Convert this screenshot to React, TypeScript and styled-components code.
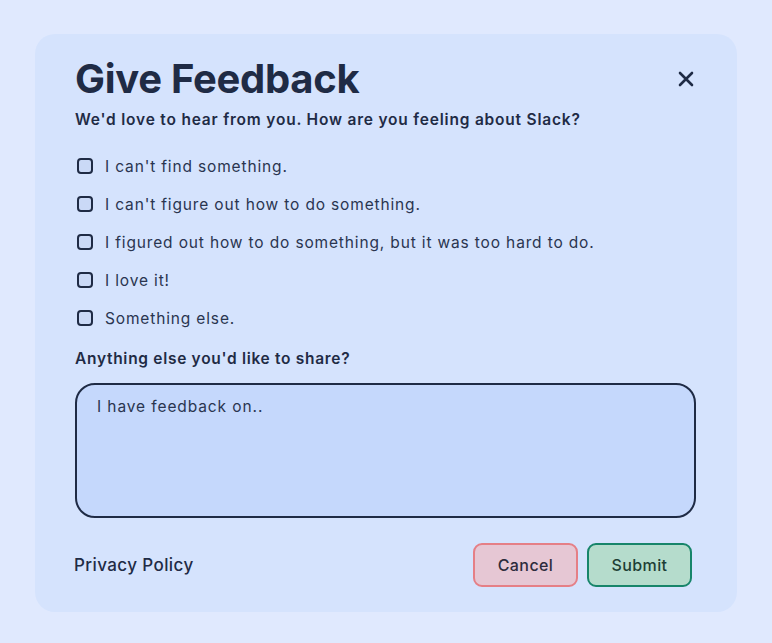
import React from "react";
import styled, { createGlobalStyle } from "styled-components";

const GlobalStyle = createGlobalStyle`
  html, body {
    margin: 0;
    padding: 0;
    background: #e0e9fe;
    font-family: Inter, "Open Sans", sans-serif;
    color: #1f2b45;
  }
  * { box-sizing: border-box; }
`;

const Page = styled.div`
  width: 772px;
  height: 643px;
  padding: 34px 35px 31px 35px;
`;

const Card = styled.div`
  width: 702px;
  height: 578px;
  background: #d5e3fd;
  border-radius: 20px;
  padding: 21px 40px 0 40px;
  display: flex;
  flex-direction: column;
`;

const Header = styled.div`
  display: flex;
  align-items: center;
  justify-content: space-between;
`;

const Title = styled.h1`
  margin: 0;
  font-size: 40px;
  font-weight: 700;
  letter-spacing: -0.3px;
  color: #1f2b45;
  line-height: 48px;
`;

const CloseButton = styled.button`
  border: none;
  background: none;
  padding: 0;
  width: 20px;
  height: 20px;
  margin-right: 1px;
  display: flex;
  align-items: center;
  justify-content: center;
  color: #1f2b45;
  cursor: pointer;
`;

const Subtitle = styled.p`
  margin: 6px 0 16px 0;
  font-size: 15.5px;
  font-weight: 600;
  letter-spacing: 0.8px;
  line-height: 22px;
`;

const Options = styled.div`
  display: flex;
  flex-direction: column;
`;

const Option = styled.label`
  display: flex;
  align-items: center;
  gap: 12px;
  height: 38px;
  font-size: 15.5px;
  letter-spacing: 0.85px;
  color: #2a3550;
  padding-left: 2px;
`;

const Box = styled.span`
  width: 16px;
  height: 16px;
  border: 2px solid #1f2b45;
  border-radius: 4px;
  background: #cad9f6;
  flex: none;
`;

const Label = styled.p`
  margin: 11px 0 13px 0;
  font-size: 15.5px;
  font-weight: 600;
  letter-spacing: 0.7px;
  line-height: 22px;
`;

const TextArea = styled.textarea`
  width: 621px;
  height: 135px;
  border: 2px solid #1f2b45;
  border-radius: 20px;
  background: #c5d8fc;
  padding: 12px 20px;
  font-family: inherit;
  font-size: 15.5px;
  letter-spacing: 0.9px;
  color: #2a3550;
  resize: none;
  outline: none;
  &::placeholder {
    color: #2a3550;
  }
`;

const Footer = styled.div`
  display: flex;
  align-items: center;
  justify-content: space-between;
  margin-top: 25px;
  padding-right: 5px;
`;

const Privacy = styled.a`
  font-size: 17px;
  font-weight: 500;
  letter-spacing: 0.4px;
  color: #1f2b45;
  margin-left: -1px;
`;

const Buttons = styled.div`
  display: flex;
  gap: 9px;
`;

const Button = styled.button<{ $variant: "cancel" | "submit" }>`
  width: 105px;
  height: 44px;
  border-radius: 9px;
  font-family: inherit;
  font-size: 16px;
  font-weight: 500;
  letter-spacing: 0.4px;
  cursor: pointer;
  border: 2px solid ${(p) => (p.$variant === "cancel" ? "#e57f86" : "#17856a")};
  background: ${(p) => (p.$variant === "cancel" ? "#e6c7d4" : "#b5dccc")};
  color: ${(p) => (p.$variant === "cancel" ? "#2d2c3d" : "#1d3f35")};
`;

const options = [
  "I can't find something.",
  "I can't figure out how to do something.",
  "I figured out how to do something, but it was too hard to do.",
  "I love it!",
  "Something else.",
];

export default function App() {
  return (
    <>
      <GlobalStyle />
      <Page>
        <Card>
          <Header>
            <Title>Give Feedback</Title>
            <CloseButton aria-label="Close">
              <svg width="16" height="16" viewBox="0 0 16 16">
                <path d="M2 2 L14 14 M14 2 L2 14" stroke="currentColor" strokeWidth="2.6" strokeLinecap="round" />
              </svg>
            </CloseButton>
          </Header>
          <Subtitle>We'd love to hear from you. How are you feeling about Slack?</Subtitle>
          <Options>
            {options.map((o) => (
              <Option key={o}>
                <Box />
                {o}
              </Option>
            ))}
          </Options>
          <Label>Anything else you'd like to share?</Label>
          <TextArea placeholder="I have feedback on.." />
          <Footer>
            <Privacy>Privacy Policy</Privacy>
            <Buttons>
              <Button $variant="cancel">Cancel</Button>
              <Button $variant="submit">Submit</Button>
            </Buttons>
          </Footer>
        </Card>
      </Page>
    </>
  );
}
